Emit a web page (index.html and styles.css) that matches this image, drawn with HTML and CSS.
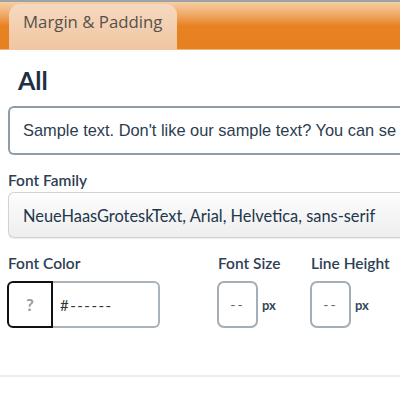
FILE: index.html
```html
<!DOCTYPE html>
<html>
<head>
<meta charset="utf-8">
<link rel="stylesheet" href="styles.css">
</head>
<body>
<div class="header">
  <div class="tab">Margin &amp; Padding</div>
</div>
<div class="content">
  <h1 class="title">All</h1>
  <div class="sample">Sample text. Don't like our sample text? You can se</div>
  <div class="label">Font Family</div>
  <div class="select">NeueHaasGroteskText, Arial, Helvetica, sans-serif</div>
  <div class="row">
    <div class="group color-group">
      <div class="label">Font Color</div>
      <div class="color">
        <div class="swatch">?</div>
        <div class="hex">#------</div>
      </div>
    </div>
    <div class="group size">
      <div class="label">Font Size</div>
      <div class="num"><div class="box">--</div><span class="unit">px</span></div>
    </div>
    <div class="group lh">
      <div class="label">Line Height</div>
      <div class="num"><div class="box">--</div><span class="unit">px</span></div>
    </div>
  </div>
</div>
<div class="divider"></div>
</body>
</html>
```
FILE: styles.css
```css
html, body { margin: 0; padding: 0; background: #fff; }
body { width: 400px; height: 400px; overflow: hidden; font-family: Lato, "Liberation Sans", sans-serif; color: #2b3d4f; }
.header {
  height: 48px;
  border-top: 2px solid #9ea3a8;
  background: linear-gradient(#f6cfa6 0%, #eea35c 30%, #e88122 50%, #e7801f 100%);
  display: flex;
  align-items: flex-end;
  padding-left: 9px;
  box-shadow: inset 0 -1px 0 #f3b77d;
}
.tab {
  width: 168px;
  height: 46px;
  box-sizing: border-box;
  border-radius: 11px 11px 0 0;
  background: linear-gradient(#f6d9bf, #efc6a2);
  color: #57514b;
  font-family: "Open Sans", "DejaVu Sans", sans-serif;
  font-size: 16.8px;
  padding: 6px 0 0 14px;
}
.content { padding: 0 0 0 8px; }
.title {
  margin: 17px 0 0 10px;
  font-size: 25px;
  font-weight: 700;
  line-height: 26px;
  color: #1d2f44;
  height: 26px;
}
.sample {
  margin-top: 13px;
  height: 49px;
  box-sizing: border-box;
  border: 2px solid #8e9ca7;
  border-right: none;
  border-radius: 6px 0 0 6px;
  padding: 0 0 0 13px;
  display: flex;
  align-items: center;
  white-space: nowrap;
  overflow: hidden;
  font-family: "Liberation Sans", Arial, sans-serif;
  font-size: 16.4px;
  color: #2b3d4f;
}
.label {
  font-size: 15.5px;
  font-weight: 600;
  color: #2e4053;
  line-height: 18px;
}
.content > .label { margin-top: 16px; }
.select {
  margin-top: 3px;
  height: 46px;
  box-sizing: border-box;
  border: 1px solid #cfd3d6;
  border-right: none;
  border-radius: 6px 0 0 6px;
  background: linear-gradient(#fdfdfd, #eeeeee);
  display: flex;
  align-items: center;
  padding-left: 14px;
  font-size: 16.4px;
  color: #22364b;
  white-space: nowrap;
  box-shadow: 0 1px 1px rgba(0,0,0,0.08);
}
.row { display: flex; margin-top: 16px; }
.group .label { margin-bottom: 9px; white-space: nowrap; }
.color-group { width: 209px; }
.size { width: 93px; }
.color { display: flex; height: 47px; }
.swatch {
  width: 46px;
  box-sizing: border-box;
  border: 2px solid #111;
  border-radius: 6px 0 0 6px;
  margin-left: -1px;
  display: flex;
  align-items: center;
  justify-content: center;
  font-weight: 700;
  font-size: 17px;
  color: #9a9a9a;
}
.hex {
  width: 107px;
  box-sizing: border-box;
  border: 2px solid #a9b3bb;
  border-left: none;
  border-radius: 0 6px 6px 0;
  display: flex;
  align-items: center;
  padding-left: 7px;
  font-size: 15px;
  color: #333;
  letter-spacing: 1.5px;
}
.group.size .label, .group.lh .label { margin-left: 1px; }
.num { display: flex; align-items: center; }
.box {
  width: 41px;
  height: 47px;
  box-sizing: border-box;
  border: 2px solid #a3aeb7;
  border-radius: 7px;
  display: flex;
  align-items: center;
  justify-content: center;
  font-size: 14px;
  color: #666;
  letter-spacing: 2px;
}
.unit { font-size: 13px; font-weight: 700; color: #34475a; margin-left: 4px; }
.divider { margin-top: 47px; height: 2px; background: #ececec; }
```
